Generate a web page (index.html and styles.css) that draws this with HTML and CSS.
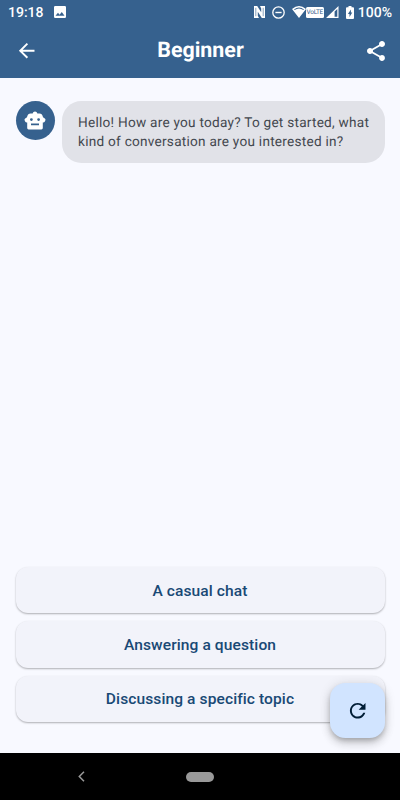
FILE: index.html
```html
<!DOCTYPE html>
<html lang="en">
<head>
    <meta charset="UTF-8">
    <meta name="viewport" content="width=device-width, initial-scale=1.0">
    <title>Beginner</title>
    <link rel="stylesheet" href="styles.css">
</head>
<body>
    <div class="screen">
        <header class="header">
            <div class="status-bar">
                <span class="time">19:18</span>
                <svg class="picture" width="12" height="12" viewBox="0 0 12 12"><path fill="#fff" fill-rule="evenodd" d="M1.2 0h9.6Q12 0 12 1.2v9.6q0 1.2-1.2 1.2H1.2Q0 12 0 10.8V1.2Q0 0 1.2 0zM1.5 9.8h9L7.8 6 5.6 8.7 4 6.8z"/></svg>
                <div class="status-icons">
                    <svg class="nfc" width="11" height="12" viewBox="0 0 11 12"><path fill="#fff" d="M0 0h3.2l4 6.3V2.4L6 0h5v12H7.8l-4-6.3v4L5 12H0z"/><path fill="none" stroke="#36618e" stroke-width=".6" d="M1.8 1.8v8.4M9.2 1.8v8.4"/></svg>
                    <svg class="dnd" width="13" height="13" viewBox="0 0 13 13"><circle cx="6.5" cy="6.5" r="5.7" fill="none" stroke="#fff" stroke-width="1.3"/><path stroke="#fff" stroke-width="1.4" d="M3.4 6.5h6.2"/></svg>
                    <svg class="wifi" width="14" height="12" viewBox="0 0 14 12"><path fill="#fff" fill-rule="evenodd" d="M0 3Q7-3 14 3L7 12zM2 3.4l.6.7q4.4-3 8.8 0l.6-.7Q7-.2 2 3.4z"/></svg>
                    <div class="volte"><span>VoLTE</span></div>
                    <svg class="signal" width="13" height="12" viewBox="0 0 13 12"><path fill="#fff" fill-rule="evenodd" d="M12.5 0v12H0zM11.3 3L8.6 5.6v5.2h2.7z"/></svg>
                    <svg class="battery" width="8" height="13" viewBox="0 0 8 13"><path fill="#fff" d="M2.5 0h3v1.3H7q1 0 1 1V12q0 1-1 1H1q-1 0-1-1V2.3q0-1 1-1h1.5z"/><path fill="#36618e" d="M4.9 3.4L1.9 8h1.6v3l2.8-4.4H4.9z"/></svg>
                    <span class="percent">100%</span>
                </div>
            </div>
            <div class="app-bar">
                <svg class="back" width="23.4" height="23.4" viewBox="0 0 24 24"><path fill="#fff" d="M20 11H7.83l5.59-5.59L12 4l-8 8 8 8 1.41-1.41L7.83 13H20z"/></svg>
                <h1>Beginner</h1>
                <svg class="share" width="24" height="24" viewBox="0 0 24 24"><path fill="#fff" d="M18 16.08c-.76 0-1.44.3-1.96.77L8.91 12.7c.05-.23.09-.46.09-.7s-.04-.47-.09-.7l7.05-4.11c.54.5 1.25.81 2.04.81 1.66 0 3-1.34 3-3s-1.34-3-3-3-3 1.34-3 3c0 .24.04.47.09.7L8.04 9.81C7.5 9.31 6.79 9 6 9c-1.66 0-3 1.34-3 3s1.34 3 3 3c.79 0 1.5-.31 2.04-.81l7.12 4.16c-.05.21-.08.43-.08.65 0 1.61 1.31 2.92 2.92 2.92s2.92-1.31 2.92-2.92-1.31-2.92-2.92-2.92z"/></svg>
            </div>
        </header>

        <main class="chat">
            <div class="message">
                <div class="avatar">
                    <svg width="22" height="19" viewBox="0 0 22 19"><path fill="#fff" fill-rule="evenodd" d="M8.6 2.4a2.5 2.5 0 0 1 4.8 0h2.1q2.6 0 3.3 3l.2.8 1.8 1.3q1 .8.6 1.7l-.7 1.5q-.4.8-1.4.8h-.5V17q0 1.4-1.4 1.4H4.6q-1.4 0-1.4-1.4v-5.5h-.5q-1 0-1.4-.8L.6 9.2q-.4-.9.6-1.7L3 6.2l.2-.8q.7-3 3.3-3zM7.4 7.2a1.4 1.4 0 1 0 0 2.8 1.4 1.4 0 1 0 0-2.8zm7.2 0a1.4 1.4 0 1 0 0 2.8 1.4 1.4 0 1 0 0-2.8zM7 12.6v1.7h8v-1.7z"/></svg>
                </div>
                <p class="bubble">Hello! How are you today? To get started, what<br>kind of conversation are you interested in?</p>
            </div>

            <div class="options">
                <button>A casual chat</button>
                <button>Answering a question</button>
                <button>Discussing a specific topic</button>
            </div>
        </main>

        <button class="refresh" aria-label="Restart">
            <svg width="23.4" height="23.4" viewBox="0 0 24 24"><path fill="#001d36" d="M17.65 6.35C16.2 4.9 14.21 4 12 4c-4.42 0-7.99 3.58-7.99 8s3.57 8 7.99 8c3.73 0 6.84-2.55 7.73-6h-2.08c-.82 2.33-3.04 4-5.65 4-3.31 0-6-2.69-6-6s2.69-6 6-6c1.66 0 3.14.69 4.22 1.78L13 11h7V4z"/></svg>
        </button>

        <nav class="nav-bar">
            <svg class="nav-back" width="7" height="11" viewBox="0 0 7 11"><path fill="none" stroke="#999" stroke-width="1.5" d="M6 .8L1.3 5.5 6 10.2"/></svg>
            <span class="home"></span>
        </nav>
    </div>
</body>
</html>
```
FILE: styles.css
```css
* {
    box-sizing: border-box;
}
body {
    margin: 0;
    font-family: Roboto, sans-serif;
    background-color: #f8f9ff;
    text-rendering: geometricPrecision;
}
svg {
    display: block;
    flex: none;
}
.screen {
    position: relative;
    display: flex;
    flex-direction: column;
    width: 400px;
    height: 800px;
    overflow: hidden;
}
.header {
    height: 77.6px;
    background-color: #36618e;
    color: #fff;
}
.status-bar {
    display: flex;
    align-items: center;
    height: 24px;
    padding: 0 8px;
    font-size: 14px;
    font-weight: 500;
}
.time, .percent {
    padding-top: 2px;
}
.time {
    width: 35px;
}
.picture {
    margin-left: 11px;
}
.status-icons {
    display: flex;
    align-items: center;
    margin-left: auto;
}
.dnd {
    margin-left: 7px;
}
.wifi {
    margin-left: 7px;
}
.volte {
    display: flex;
    align-items: center;
    justify-content: center;
    width: 18px;
    height: 11px;
    border-radius: 1.5px;
    background-color: #fff;
    color: #36618e;
    font-size: 6.5px;
    font-weight: 400;
    line-height: 9px;
    letter-spacing: -0.3px;
}
.signal {
    margin-left: 2px;
}
.battery {
    margin-left: 7px;
    margin-right: 4px;
}
.app-bar {
    display: flex;
    align-items: center;
    justify-content: space-between;
    height: 53px;
    padding: 0 11.8px 0 15.4px;
}
.app-bar h1 {
    margin: 1px 2px 0 0;
    font-size: 21.4px;
    font-weight: 700;
    line-height: 26px;
}
.chat {
    flex: 1;
    display: flex;
    flex-direction: column;
    justify-content: space-between;
    padding: 23.4px 15.5px 31.2px 15.5px;
}
.message {
    display: flex;
    gap: 7.8px;
}
.avatar {
    display: flex;
    align-items: center;
    justify-content: center;
    width: 39px;
    height: 39px;
    border-radius: 50%;
    background-color: #36618e;
}
.bubble {
    flex: 1;
    margin: 0;
    padding: 12.7px 0 10.6px 15.8px;
    border-radius: 19.5px;
    background-color: #e1e2e8;
    color: #43474e;
    font-size: 13.6px;
    line-height: 19.5px;
    letter-spacing: 0.25px;
    white-space: nowrap;
}
.options {
    display: flex;
    flex-direction: column;
    gap: 7.8px;
}
.options button {
    height: 46.6px;
    padding: 1px 0 0;
    border: none;
    border-radius: 12px;
    background-color: #f2f3fa;
    box-shadow: 0 1px 2px rgba(0, 0, 0, 0.3);
    color: #194975;
    font-family: inherit;
    font-size: 15.55px;
    font-weight: 500;
    letter-spacing: 0.1px;
}
.refresh {
    position: absolute;
    right: 15.5px;
    bottom: 62.3px;
    display: flex;
    align-items: center;
    justify-content: center;
    width: 54.4px;
    height: 54.4px;
    padding: 0;
    border: none;
    border-radius: 15.5px;
    background-color: #d1e4ff;
    box-shadow: 0 3px 5px -1px rgba(0, 0, 0, 0.2), 0 6px 10px rgba(0, 0, 0, 0.14), 0 1px 12px rgba(0, 0, 0, 0.12);
}
.nav-bar {
    display: flex;
    align-items: center;
    height: 46.7px;
    padding-left: 78px;
    background-color: #000;
}
.home {
    width: 28px;
    height: 10px;
    margin-left: 101px;
    border-radius: 5px;
    background-color: #999;
}
```
